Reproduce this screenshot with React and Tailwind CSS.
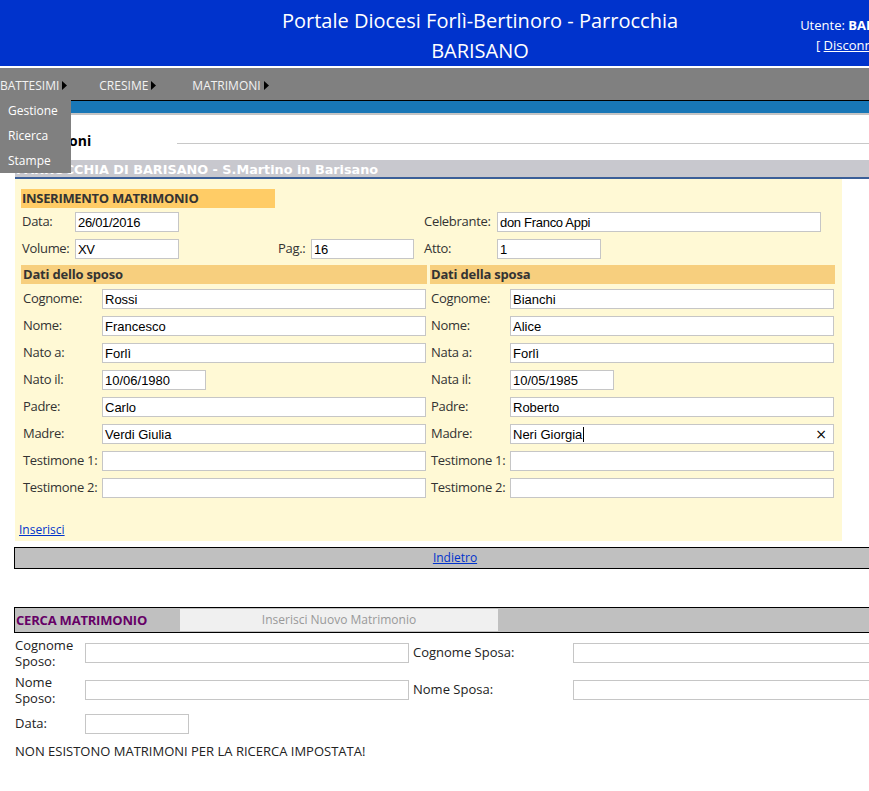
import React from "react";

const Tri = () => (
  <svg width="5" height="9" viewBox="0 0 5 9" className="ml-[3px] inline-block">
    <polygon points="0,0 5,4.5 0,9" fill="#000" />
  </svg>
);

function Field({ w, value, children }) {
  return (
    <div
      className={`${w} h-[20px] border border-[#c6c6c6] bg-white pl-[2px] flex items-center font-['Liberation_Sans',Arial,sans-serif] text-[13px] text-black leading-none whitespace-nowrap`}
    >
      {value}
      {children}
    </div>
  );
}

const sposo = [
  ["Cognome:", "Rossi"],
  ["Nome:", "Francesco"],
  ["Nato a:", "Forlì"],
  ["Nato il:", "10/06/1980", true],
  ["Padre:", "Carlo"],
  ["Madre:", "Verdi Giulia"],
  ["Testimone 1:", ""],
  ["Testimone 2:", ""],
];
const sposa = [
  ["Cognome:", "Bianchi"],
  ["Nome:", "Alice"],
  ["Nata a:", "Forlì"],
  ["Nata il:", "10/05/1985", true],
  ["Padre:", "Roberto"],
  ["Madre:", "Neri Giorgia", false, true],
  ["Testimone 1:", ""],
  ["Testimone 2:", ""],
];

function Column({ title, rows, labelW, pad, w }) {
  return (
    <div className={`${w} flex flex-col`}>
      <div className={`h-[19px] bg-[#f7cf7e] ${pad} flex items-center font-bold text-[13px] tracking-[-0.2px] text-[#333]`}>
        {title}
      </div>
      <div className="mt-[5px] flex flex-col gap-[7px]">
        {rows.map(([l, v, short, focus]) => (
          <div key={l} className="flex items-center h-[20px]">
            <div className={`${labelW} ${pad} text-[13px] tracking-[-0.3px] text-[#333] whitespace-nowrap`}>{l}</div>
            {focus ? (
              <Field w="w-[324px]" value={v}>
                <span className="w-[1px] h-[15px] bg-black ml-[1px]" />
                <span className="ml-auto mr-[6px] text-[14px] font-['DejaVu_Sans',sans-serif]">×</span>
              </Field>
            ) : (
              <Field w={short ? "w-[104px]" : "w-[324px]"} value={v} />
            )}
          </div>
        ))}
      </div>
    </div>
  );
}

export default function App() {
  return (
    <div className="w-[869px] h-[791px] overflow-hidden bg-white font-['Open_Sans',sans-serif]">
      <div className="w-[960px]">
        {/* header */}
        <div className="h-[66px] bg-[#0033cc] flex text-white">
          <div className="w-[204px]" />
          <div className="flex-1 text-center text-[20px] leading-[30px] pt-[6px]">
            <div>Portale Diocesi Forlì-Bertinoro - Parrocchia</div>
            <div>BARISANO</div>
          </div>
          <div className="w-[204px] text-center text-[13px] leading-[20px] pt-[15px]">
            <div>
              Utente: <span className="font-bold">BARISANO</span>
            </div>
            <div>
              [ <span className="underline">Disconnetti</span> ]
            </div>
          </div>
        </div>
        <div className="h-[2px] bg-white" />
        {/* nav */}
        <div className="relative">
          <div className="h-[33px] bg-[#808080] border-b border-black flex items-center pt-[3px] text-[12px] text-[#f2f2f2]">
            <div className="flex items-center">
              BATTESIMI
              <Tri />
            </div>
            <div className="flex items-center ml-[32px]">
              CRESIME
              <Tri />
            </div>
            <div className="flex items-center ml-[36px]">
              MATRIMONI
              <Tri />
            </div>
          </div>
          <div className="h-[12px] bg-[#1877b7]" />
          <div className="h-[2px] bg-[#c4c4c4]" />
          {/* dropdown */}
          <div className="absolute left-0 top-[30px] w-[71px] bg-[#808080] flex flex-col text-[12px] text-white z-10">
            <div className="h-[25px] pl-[8px] flex items-center">Gestione</div>
            <div className="h-[25px] pl-[8px] flex items-center">Ricerca</div>
            <div className="h-[25px] pl-[8px] flex items-center">Stampe</div>
          </div>
        </div>
        {/* heading */}
        <div className="h-[45px] flex items-center pt-[6px]">
          <div className="w-[177px] pl-[17px] font-bold text-[14px] text-black">Matrimoni</div>
          <div className="flex-1 border-t border-[#c8c8c8] mt-[6px]" />
        </div>
        {/* banner */}
        <div className="ml-[15px] h-[19px] bg-[#c8c8ce] border-b-2 border-[#3b5f98] flex items-center pl-[1px] pt-[2px] font-['DejaVu_Sans',sans-serif] font-bold text-[12.8px] text-white whitespace-nowrap">
          PARROCCHIA DI BARISANO - S.Martino in Barisano
        </div>
        {/* form */}
        <div className="ml-[15px] w-[827px] bg-[#fff9d5] pt-[10px] pb-[2px]">
          <div className="ml-[6px] w-[254px] h-[19px] bg-[#ffcc66] pl-[1px] flex items-center font-bold text-[13px] tracking-[-0.3px] text-[#333]">
            INSERIMENTO MATRIMONIO
          </div>
          <div className="mt-[4px] pl-[7px] flex items-center h-[20px] text-[13px] tracking-[-0.3px] text-[#333]">
            <div className="w-[402px] flex items-center">
              <div className="w-[53px]">Data:</div>
              <Field w="w-[104px]" value="26/01/2016" />
            </div>
            <div className="w-[73px]">Celebrante:</div>
            <Field w="w-[324px]" value="don Franco Appi" />
          </div>
          <div className="mt-[7px] pl-[7px] flex items-center h-[20px] text-[13px] tracking-[-0.3px] text-[#333]">
            <div className="w-[402px] flex items-center">
              <div className="w-[53px]">Volume:</div>
              <Field w="w-[104px]" value="XV" />
              <div className="w-[99px]" />
              <div className="w-[33px]">Pag.:</div>
              <Field w="w-[103px]" value="16" />
            </div>
            <div className="w-[73px]">Atto:</div>
            <Field w="w-[104px]" value="1" />
          </div>
          <div className="mt-[6px] ml-[6px] flex gap-[3px]">
            <Column title="Dati dello sposo" rows={sposo} labelW="w-[81px]" pad="pl-[2px]" w="w-[406px]" />
            <Column title="Dati della sposa" rows={sposa} labelW="w-[80px]" pad="pl-[1px]" w="w-[405px]" />
          </div>
          <div className="mt-[23px] pl-[4px] h-[18px] flex items-center text-[12px]">
            <span className="text-[#0033cc] underline">Inserisci</span>
          </div>
        </div>
        {/* indietro */}
        <div className="mt-[6px] ml-[14px] w-[882px] h-[22px] bg-[#c0c0c0] border border-black flex items-center justify-center text-[12px]">
          <span className="text-[#0033cc] underline">Indietro</span>
        </div>
        {/* cerca */}
        <div className="mt-[38px] ml-[14px] w-[882px] h-[26px] bg-[#c0c0c0] border border-black flex items-center">
          <div className="w-[165px] pl-[1px] pt-[2px] font-bold text-[13px] tracking-[-0.2px] text-[#660066]">CERCA MATRIMONIO</div>
          <div className="w-[318px] h-[22px] bg-[#f0f0f0] flex items-center justify-center text-[12px] text-[#999]">
            Inserisci Nuovo Matrimonio
          </div>
        </div>
        {/* search form */}
        <div className="ml-[15px] mt-[2px] flex flex-col text-[13px] text-[#222]">
          <div className="h-[36px] flex items-center">
            <div className="w-[70px] leading-[16px]">
              Cognome
              <br />
              Sposo:
            </div>
            <Field w="w-[324px]" value="" />
            <div className="w-[164px] pl-[4px]">Cognome Sposa:</div>
            <Field w="w-[324px]" value="" />
          </div>
          <div className="h-[37px] flex items-center">
            <div className="w-[70px] leading-[16px]">
              Nome
              <br />
              Sposo:
            </div>
            <Field w="w-[324px]" value="" />
            <div className="w-[164px] pl-[4px]">Nome Sposa:</div>
            <Field w="w-[324px]" value="" />
          </div>
          <div className="mt-[3px] h-[26px] flex items-center">
            <div className="w-[70px]">Data:</div>
            <Field w="w-[104px]" value="" />
          </div>
          <div className="mt-[7px] h-[16px] flex items-center text-[13px] text-[#222]">
            NON ESISTONO MATRIMONI PER LA RICERCA IMPOSTATA!
          </div>
        </div>
      </div>
    </div>
  );
}
